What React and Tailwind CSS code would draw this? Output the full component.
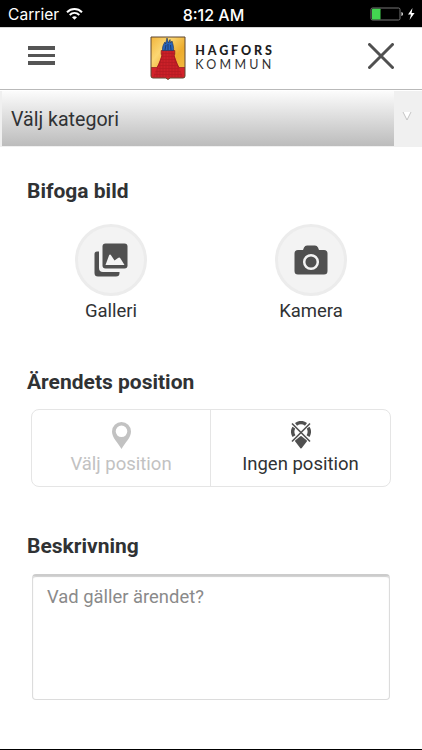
import { useState } from "react"

function StatusBar(){
    return(
    <div className="h-[27px] shrink-0 bg-black text-white font-[Inter,sans-serif] grid grid-cols-3 items-center pt-[2px]">
        <div className="flex items-center gap-[7px] pl-[8px] text-[15.6px] leading-none">
            <span>Carrier</span>
            <svg width="17" height="12" viewBox="0 0 17 12" fill="none" stroke="white" strokeWidth="2" className="-mt-[2px]">
                <path d="M1 4.2C5.3 0 11.7 0 16 4.2"/>
                <path d="M3.7 7C6.5 4.4 10.5 4.4 13.3 7"/>
                <path d="M8.5 11.8L6 9.3C7.4 7.9 9.6 7.9 11 9.3Z" fill="white" stroke="none"/>
            </svg>
        </div>
        <div className="text-center text-[16px] font-medium leading-none pl-[5px] whitespace-nowrap">8:12 AM</div>
        <div className="flex items-center justify-end pr-[6px] -mt-[2px]">
            <svg width="46" height="14" viewBox="0 0 46 14">
                <rect x="1" y="1" width="29" height="12" rx="1.5" fill="none" stroke="#777777" strokeWidth="1"/>
                <rect x="2" y="1.7" width="8.5" height="10.8" rx="0.5" fill="#43d551"/>
                <path d="M31.5 5c1.8.5 1.8 3.5 0 4z" fill="white"/>
                <path d="M42.5 1L38 7.6H41L39.5 13L44.6 6H41.6Z" fill="white"/>
            </svg>
        </div>
    </div>
    )
}

function Crest(){
    return(
    <svg width="36" height="44" viewBox="0 0 36 44">
        <defs>
            <linearGradient id="gold" x1="0" y1="0" x2="1" y2="1">
                <stop offset="0" stopColor="#f2b43c"/>
                <stop offset="0.3" stopColor="#fbd773"/>
                <stop offset="0.6" stopColor="#edac2d"/>
                <stop offset="1" stopColor="#f6bf48"/>
            </linearGradient>
            <pattern id="brick" width="3" height="3" patternUnits="userSpaceOnUse">
                <rect width="3" height="3" fill="#cb2028"/>
                <path d="M0 2.5H3M1 0V2.5" stroke="#a8181f" strokeWidth="0.5"/>
            </pattern>
        </defs>
        <path d="M1 1H35V40Q35 42 33 42H20L18 43.5L16 42H3Q1 42 1 40Z" fill="url(#gold)"/>
        <path d="M1 31.5H7L12 18.5H24L29 31.5H35V40Q35 42 33 42H20L18 43.5L16 42H3Q1 42 1 40Z" fill="#d3222a"/>
        <path d="M7 31.5C10 27 11.5 22 12 18.5H11.2V14.5H24.8V18.5H24C24.5 22 26 27 29 31.5L33 41H3Z" fill="url(#brick)"/>
        <path d="M1 31.5H7C10 27 11.5 22 12 18.5H11.2V14.5H24.8V18.5H24C24.5 22 26 27 29 31.5H35" fill="none" stroke="#8f1a1e" strokeWidth="0.7"/>
        <path d="M12.5 14.5C12 11 13.5 8 15 6L15.5 8L17 2L18.5 7L20 3.5L20.5 7L22 5C23 8 24 12 23.5 14.5Z" fill="#2864ba" stroke="#1c3158" strokeWidth="0.6"/>
        <path d="M15 14L16 9M18 14V8M21 14L20.5 9" stroke="#172c52" strokeWidth="0.7"/>
        <path d="M1 1H35V40Q35 42 33 42H20L18 43.5L16 42H3Q1 42 1 40Z" fill="none" stroke="#5e4630" strokeWidth="1"/>
    </svg>
    )
}

function Header(){
    return(
    <header className="h-[63px] shrink-0 flex items-center justify-between border-t border-t-[#d5d5d5] border-b border-b-[#b9b9b9] pl-[28px] pr-[28px]">
        <button aria-label="Meny" className="flex flex-col gap-[4px] w-[27px] -mt-[6px]">
            <span className="h-[3.5px] bg-[#555555]"></span>
            <span className="h-[3.5px] bg-[#555555]"></span>
            <span className="h-[3.5px] bg-[#555555]"></span>
        </button>
        <div className="flex items-center gap-[9px] ml-[2px] -mt-[1px]">
            <Crest/>
            <div className="font-[Lato,sans-serif] text-[#202020] text-[12.5px] leading-[14px] whitespace-nowrap -mt-[1px]">
                <div className="font-black tracking-[2.9px]">HAGFORS</div>
                <div className="text-[12.5px] text-[#333333] tracking-[3.3px]">KOMMUN</div>
            </div>
        </div>
        <button aria-label="Stäng" className="-mt-[6px]">
            <svg width="26" height="26" viewBox="0 0 26 26" stroke="#505050" strokeWidth="3" strokeLinecap="round">
                <path d="M1.5 1.5L24.5 24.5M24.5 1.5L1.5 24.5"/>
            </svg>
        </button>
    </header>
    )
}

function RoundButton({label,children}){
    return(
    <button className="w-[72px] flex flex-col items-center">
        <span className="w-[72px] h-[72px] rounded-full bg-[#f3f3f3] border-[3px] border-[#ececec] flex items-center justify-center text-[#505050]">
            {children}
        </span>
        <span className="mt-[3px] text-[18.5px] leading-[24px] text-[#303234]">{label}</span>
    </button>
    )
}

export default function App(){

    const [description,setDescription] = useState("")

    return(
    <div className="w-full h-[750px] flex flex-col bg-white border-b border-b-black font-[Roboto,sans-serif] text-[#303234] overflow-hidden">
        <StatusBar/>
        <Header/>

        <div className="mt-px h-[56px] shrink-0 flex pl-[2px] bg-[#f0f0f0]">
            <div className="flex-1 h-[55px] bg-linear-to-b from-[#fcfcfc] to-[#bcbcbc] flex items-center pl-[9px] pt-[2px] text-[19.6px]">Välj kategori</div>
            <div className="w-[28px] flex justify-center pt-[20px] pr-[3px]">
                <svg width="10" height="10" viewBox="0 0 10 10">
                    <path d="M1 1H9L5 9Z" fill="white"/>
                    <path d="M1 1L5 9L9 1" fill="none" stroke="#c4c4c4" strokeWidth="1"/>
                </svg>
            </div>
        </div>

        <main className="px-[27px]">
            <h2 className="mt-[30px] text-[21px] leading-[28px] font-bold">Bifoga bild</h2>
            <div className="mt-[19px] flex gap-[128px] pl-[48px]">
                <RoundButton label="Galleri">
                    <svg width="34" height="34" viewBox="0 0 34 34" fill="currentColor">
                        <path d="M11.5 0.5H30.5Q33.5 0.5 33.5 3.5V22.5Q33.5 25.5 30.5 25.5H11.5Q8.5 25.5 8.5 22.5V3.5Q8.5 .5 11.5 .5Z"/>
                        <path d="M3 8.5H5V25Q5 29 9 29H25.5V30Q25.5 33.5 22 33.5H4Q.5 33.5 .5 30V11Q.5 8.5 3 8.5Z"/>
                        <path d="M11.5 22L15 12.5Q16 10.5 17.2 12.5L20.5 17.5L24 15Q25.5 14 26.5 15.5L30.5 22Z" fill="#f3f3f3"/>
                    </svg>
                </RoundButton>
                <RoundButton label="Kamera">
                    <svg width="34" height="30" viewBox="0 0 34 30" fill="currentColor">
                        <path d="M4 5H9L10 2.5Q11 .5 13 .5H21Q23 .5 24 2.5L25 5H30Q33.5 5 33.5 8.5V26Q33.5 29.5 30 29.5H4Q.5 29.5 .5 26V8.5Q.5 5 4 5Z"/>
                        <circle cx="17" cy="17" r="6.8" fill="none" stroke="#f3f3f3" strokeWidth="2.5"/>
                    </svg>
                </RoundButton>
            </div>

            <h2 className="mt-[45px] text-[21px] leading-[28px] font-bold">Ärendets position</h2>
            <div className="mt-[13px] ml-[4px] w-[360px] h-[78px] flex rounded-[8px] border border-[#e5e5e5]">
                <button className="w-[179px] flex flex-col items-center pt-[12px] border-r border-r-[#e5e5e5] text-[#c2c2c2]">
                    <svg width="19" height="27" viewBox="0 0 19 27" fill="currentColor" fillRule="evenodd">
                        <path d="M9.5 0A9.5 9.5 0 0 0 0 9.5C0 16 6 20.5 9.5 27C13 20.5 19 16 19 9.5A9.5 9.5 0 0 0 9.5 0ZM9.5 3.5A5.8 5.8 0 1 1 9.5 15.1A5.8 5.8 0 1 1 9.5 3.5Z"/>
                    </svg>
                    <span className="mt-[3px] text-[18.5px] leading-[24px]">Välj position</span>
                </button>
                <button className="flex-1 flex flex-col items-center pt-[11px]">
                    <svg width="20" height="28" viewBox="0 0 20 28" fill="none" stroke="#505050">
                        <path d="M5 3.4A8.5 8.5 0 0 1 15 3.4" strokeWidth="3.4"/>
                        <path d="M2.9 6.5A8.5 8.5 0 0 0 3 15.2M17.1 6.5A8.5 8.5 0 0 1 17 15.2" strokeWidth="3.4"/>
                        <path d="M1 2.5L19 20.5M19 2.5L1 20.5" stroke="white" strokeWidth="3"/>
                        <path d="M10 16L15 20L10 26.5L5 20Z" fill="#505050" strokeWidth="2" strokeLinejoin="round"/>
                        <path d="M1 2.5L19 20.5M19 2.5L1 20.5" strokeWidth="1.6"/>
                    </svg>
                    <span className="mt-[3px] text-[18.5px] leading-[24px]">Ingen position</span>
                </button>
            </div>

            <h2 className="mt-[45px] text-[21px] leading-[28px] font-bold">Beskrivning</h2>
            <textarea
                value={description}
                onChange={(e)=>setDescription(e.target.value)}
                placeholder="Vad gäller ärendet?"
                className="block mt-[14px] ml-[5px] w-[358px] h-[126px] resize-none rounded-[4px] border border-[#dcdcdc] border-t-2 border-t-[#cccccc] shadow-[inset_0_1px_1px_#cfcfcf] px-[14px] pt-[9px] text-[18.4px] leading-[24px] placeholder:text-[#8a8a8a] outline-none"
            />
        </main>
    </div>
    )
}
